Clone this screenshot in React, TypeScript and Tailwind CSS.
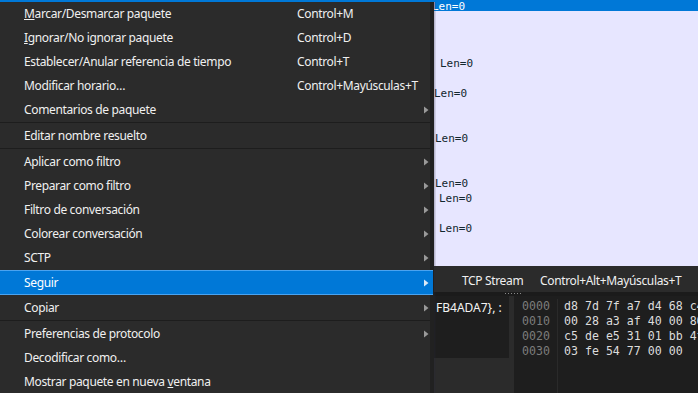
import type { ReactNode } from "react";

// Menú contextual de la lista de paquetes (tema oscuro) sobre la ventana principal.

const UI = "font-['Noto_Sans','Open_Sans',sans-serif]";
const MONO = "font-['DejaVu_Sans_Mono','Liberation_Mono',monospace]";

type Row = { label: ReactNode; shortcut?: string; sub?: boolean };

const Arrow = ({ light }: { light?: boolean }) => (
    <svg width="5" height="8" viewBox="0 0 5 8" aria-hidden="true">
        <polygon points="0,0.5 4.5,4 0,7.5" fill={light ? "#dbe9f7" : "#9a9a9a"} />
    </svg>
);

const MenuRow = ({ label, shortcut, sub }: Row) => (
    <div className="flex h-[24px] shrink-0 items-center pl-[24px] pr-[5px] text-[#f0f0f0]">
        <span className="w-[273px] whitespace-nowrap">{label}</span>
        <span className="flex-1 whitespace-nowrap">{shortcut}</span>
        {sub && <Arrow />}
    </div>
);

const Sep = () => <div className="h-[2px] shrink-0 border-t border-[#1d1d1d] mr-[4px]" />;

// filas de la lista de paquetes: solo asoma "Len=0" a la derecha del menú
const listRows: (number | null)[] = [
    null, null, null, 440, null, 434, null, null, 435, null, null, 435, 439, null, 439, null, null,
];

const hexRows = [
    ["0000", "d8 7d 7f a7 d4 68 c4 3e"],
    ["0010", "00 28 a3 af 40 00 80 06"],
    ["0020", "c5 de e5 31 01 bb 4f 2a"],
    ["0030", "03 fe 54 77 00 00"],
];

export default function App() {
    return (
        <div className={`relative h-[393px] w-[698px] overflow-hidden bg-[#2b2b2b] ${UI} text-[12px] tracking-[-0.35px]`}>
            {/* ── Ventana de fondo ─────────────────────────────────────── */}
            <div className="flex h-full flex-col tracking-normal">
                {/* fila seleccionada (azul) */}
                <div className={`flex h-[11px] shrink-0 items-end overflow-hidden bg-[#0078d7] pl-[432px] ${MONO} text-[11px] leading-[15px] text-white`}>
                    <span className="-mb-[3px]">Len=0</span>
                </div>

                {/* lista de paquetes */}
                <div className={`flex shrink-0 flex-col bg-[#e7e6ff] ${MONO} text-[11px] text-[#12272e]`}>
                    {listRows.map((x, i) => (
                        <div key={i} className="flex h-[15px] items-center">
                            {x !== null && (
                                <span className="leading-none" style={{ paddingLeft: x }}>
                                    Len=0
                                </span>
                            )}
                        </div>
                    ))}
                </div>

                <div className="h-[26px] shrink-0 bg-[#2b2b2b]" />

                {/* divisor con asa */}
                <div className="flex h-[4px] shrink-0 items-start bg-[#1b1b1b] pl-[505px] pt-px">
                    <div className="h-px w-[18px] bg-[repeating-linear-gradient(90deg,#8a8a8a_0_1px,transparent_1px_3px)]" />
                </div>

                {/* paneles inferiores */}
                <div className="flex min-h-0 flex-1">
                    <div className="flex w-[509px] shrink-0 flex-col bg-[#2b2b2b]">
                        <div className="h-[62px] bg-[#1e1e1e] pt-[4px]">
                            <div className="flex h-[15px] items-center whitespace-nowrap pl-[436px] text-[#f4f4f4]">
                                {"FB4ADA7}, :"}
                            </div>
                        </div>
                    </div>
                    <div className="w-[5px] shrink-0 bg-[#2b2b2b]" />
                    <div className={`flex min-w-0 flex-1 overflow-hidden bg-[#1e1e1e] pt-[3px] ${MONO} text-[11.6px]`}>
                        <div className="flex w-[43px] shrink-0 flex-col pl-[8px] text-[#7c7c7c]">
                            {hexRows.map(([o]) => (
                                <div key={o} className="flex h-[15px] items-center">{o}</div>
                            ))}
                        </div>
                        <div className="flex flex-1 flex-col border-l border-[#2a2a2a] pl-[6px] text-[#dcdcdc]">
                            {hexRows.map(([o, b]) => (
                                <div key={o} className="flex h-[15px] items-center whitespace-pre">{b}</div>
                            ))}
                        </div>
                    </div>
                </div>
            </div>

            {/* ── Submenú "Seguir" ─────────────────────────────────────── */}
            <div className="absolute left-[435px] top-[268px] flex h-[24px] w-[300px] items-center bg-[#2b2b2b] pt-[2px] text-[#f0f0f0]">
                <span className="w-[105px] pl-[27px] whitespace-nowrap">TCP Stream</span>
                <span className="whitespace-nowrap">Control+Alt+Mayúsculas+T</span>
            </div>

            {/* ── Menú contextual ──────────────────────────────────────── */}
            <div className="absolute left-0 top-[2px] bottom-0 flex w-[434px] flex-col bg-[linear-gradient(90deg,#2b2b2b_430px,#212121_430px)] shadow-[1.5px_0_0_rgba(40,40,60,0.25)]">
                <MenuRow label={<><span className="underline">M</span>arcar/Desmarcar paquete</>} shortcut="Control+M" />
                <MenuRow label={<><span className="underline">I</span>gnorar/No ignorar paquete</>} shortcut="Control+D" />
                <MenuRow label="Establecer/Anular referencia de tiempo" shortcut="Control+T" />
                <MenuRow label="Modificar horario…" shortcut="Control+Mayúsculas+T" />
                <MenuRow label="Comentarios de paquete" sub />
                <Sep />
                <MenuRow label="Editar nombre resuelto" />
                <Sep />
                <MenuRow label="Aplicar como filtro" sub />
                <MenuRow label="Preparar como filtro" sub />
                <MenuRow label="Filtro de conversación" sub />
                <MenuRow label="Colorear conversación" sub />
                <MenuRow label="SCTP" sub />

                {/* elemento activo */}
                <div className="h-[26px] shrink-0">
                    <div className="mr-[1px] flex h-[25px] items-center border-y border-[#4aa3f0] bg-[#0078d7] pl-[24px] pr-[4px] text-white">
                        <span className="flex-1">Seguir</span>
                        <Arrow light />
                    </div>
                </div>

                <MenuRow label="Copiar" sub />
                <Sep />
                <MenuRow label="Preferencias de protocolo" sub />
                <MenuRow label="Decodificar como…" />
                <MenuRow label={<>Mostrar paquete en nueva <span className="underline">v</span>entana</>} />
            </div>
        </div>
    );
}
